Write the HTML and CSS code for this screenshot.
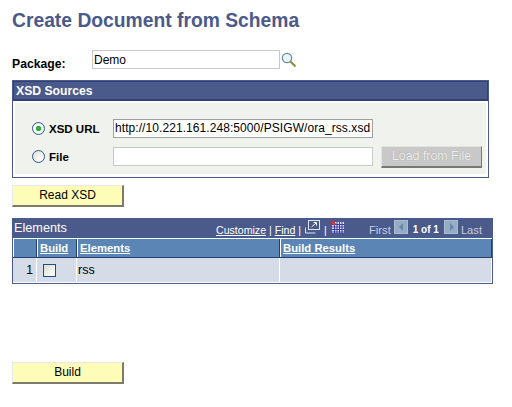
FILE: index.html
```html
<!DOCTYPE html>
<html lang="en">
<head>
<meta charset="utf-8">
<title>Create Document from Schema</title>
<link rel="stylesheet" href="styles.css">
</head>
<body>
<h1 class="title">Create Document from Schema</h1>
<div class="package-row">
  <span class="package-label">Package:</span>
  <div class="text-input package-input">Demo</div>
  <svg class="lookup" width="16" height="16" viewBox="0 0 16 16"><circle cx="6" cy="6" r="4.7" fill="#e8f4f6" stroke="#5f8f9c" stroke-width="1.2"/><path d="M3.5 5a3 3 0 0 1 2-2" stroke="#fff" fill="none"/><path d="M9.5 9.5l5 5" stroke="#8c8a38" stroke-width="2"/></svg>
</div>
<section class="panel">
  <div class="panel-head">XSD Sources</div>
  <div class="panel-body">
    <div class="source-row first">
      <span class="radio on"></span>
      <span class="source-label url">XSD URL</span>
      <div class="text-input url-input">http://10.221.161.248:5000/PSIGW/ora_rss.xsd</div>
    </div>
    <div class="source-row">
      <span class="radio"></span>
      <span class="source-label file">File</span>
      <div class="text-input file-input"></div>
      <div class="load-btn">Load from File</div>
    </div>
  </div>
</section>
<div class="btn read">Read XSD</div>
<section class="grid">
  <div class="grid-head">
    <span class="grid-title">Elements</span>
    <span class="grid-links"><u>Customize</u> | <u>Find</u> |</span>
    <svg class="ico-view" width="15" height="14" viewBox="0 0 15 14"><path d="M0.5 7.5v5.5h10" fill="none" stroke="#dfe6f2"/><rect x="3.5" y="0.5" width="11" height="9" fill="#4a5a8a" stroke="#dfe6f2"/><path d="M6.5 7l4.5-4M8.5 2.5h3v3" stroke="#fff" fill="none"/></svg>
    <span class="grid-pipe">|</span>
    <svg class="ico-grid" width="15" height="15" viewBox="0 0 15 15"><rect x="2" y="3" width="12" height="11" fill="#e4e8f6"/><path d="M2 5.5h12M2 8h12M2 10.5h12M2 13h12M4.5 3v11M7 3v11M9.5 3v11M12 3v11" stroke="#3a3aa8" stroke-width="1"/><path d="M0 0l6.5 5-3.5 1.5z" fill="#e03030"/></svg>
    <span class="grid-nav">
      <span class="nav-text">First</span>
      <span class="nav-arrow left"></span>
      <b class="nav-count">1 of 1</b>
      <span class="nav-arrow right"></span>
      <span class="nav-text">Last</span>
    </span>
  </div>
  <div class="grid-cols">
    <div class="col c-num"></div>
    <div class="col c-build"><u>Build</u></div>
    <div class="col c-el"><u>Elements</u></div>
    <div class="col c-res"><u>Build Results</u></div>
  </div>
  <div class="grid-row">
    <div class="cell c-num num">1</div>
    <div class="cell c-build"><span class="check"></span></div>
    <div class="cell c-el">rss</div>
    <div class="cell c-res"></div>
  </div>
</section>
<div class="btn build">Build</div>
</body>
</html>
```
FILE: styles.css
```css
html, body { margin: 0; padding: 0; background: #fff; }
body {
  width: 512px; height: 407px; overflow: hidden;
  font-family: "Liberation Sans", Arial, sans-serif;
  font-size: 12px; color: #000;
  padding: 10px 0 0 12px; box-sizing: border-box;
}
.title { margin: 0; font-size: 19.3px; line-height: 21px; font-weight: bold; color: #4a5a8a; }
.package-row { display: flex; align-items: flex-start; margin-top: 19px; height: 30px; }
.package-label { width: 80px; margin-top: 7px; font-weight: bold; line-height: 15px; font-size: 12.2px; }
.text-input {
  box-sizing: border-box; border: 1px solid #c8c8c8; background: #fff;
  height: 19px; line-height: 17px; padding-left: 1px; white-space: nowrap; overflow: hidden;
}
.package-input { width: 188px; height: 19px; line-height: 18px; }
.lookup { margin: 2px 0 0 1px; }
.panel { width: 477px; height: 98px; box-sizing: border-box; border: 1px solid #4a5a8a; background: #fff; }
.panel-head {
  height: 20px; box-sizing: border-box; background: #4a5a8a; color: #fff; font-weight: bold;
  font-size: 12.2px; line-height: 19px; padding-left: 2px; border: 1px solid #2f4279; border-bottom-width: 2px;
}
.panel-body { background: #f0f2ee; margin: 2px; height: 71px; box-sizing: border-box; padding-top: 16px; }
.source-row { display: flex; align-items: center; height: 19px; margin-bottom: 9px; }
.radio {
  box-sizing: border-box; width: 13px; height: 13px; border-radius: 50%; margin-left: 17px;
  border: 1px solid #2f5a8a; background: radial-gradient(circle at 65% 65%, #fff, #dcdcd4);
  flex: none;
}
.radio.on { background: radial-gradient(circle, #28b040 0 2.5px, #fff 3px, #e6e6e0); }
.source-label { font-weight: bold; margin-left: 3px; width: 65px; flex: none; font-size: 11.5px; padding-left: 1px; box-sizing: border-box; }
.url-input { width: 260px; border-color: #a0a0a0; letter-spacing: 0.07px; }
.file-input { width: 260px; }
.load-btn {
  box-sizing: border-box; width: 101px; height: 22px; margin-left: 8px; background: #c8c8c8;
  color: #eee; text-align: center; line-height: 19px; font-size: 12.4px;
  border: 1px solid #e2e2e2; border-right: 1px solid #777; border-bottom: 2px solid #777;
  text-shadow: 0 0 1px #999;
}
.btn {
  box-sizing: border-box; width: 112px; height: 22px; background: #fdfdb8; text-align: center;
  line-height: 19px; border: 1px solid #e8e8e8; border-right: 2px solid #7d7a6c; border-bottom: 2px solid #7d7a6c;
}
.read { margin-top: 7px; }
.grid {
  width: 481px; height: 66px; box-sizing: border-box; margin-top: 11px;
  border: 1px solid #4a5a8a; border-top: 0;
}
.grid-head { height: 20px; background: #4a5a8a; color: #fff; position: relative; }
.grid-title { position: absolute; left: 1px; top: 0; line-height: 20px; font-size: 12.7px; }
.grid-links { position: absolute; left: 203px; top: 2px; font-size: 10.6px; line-height: 21px; white-space: nowrap; }
.ico-view { position: absolute; left: 292px; top: 2px; }
.grid-pipe { position: absolute; left: 311px; top: 2px; font-size: 10.6px; line-height: 21px; }
.ico-grid { position: absolute; left: 317px; top: 1px; }
.grid-nav { position: absolute; left: 356px; top: 0; display: flex; align-items: center; height: 20px; font-size: 11px; }
.nav-text { color: #c5cfe0; margin-top: 3px; font-size: 11.2px; }
.nav-arrow {
  width: 14px; height: 14px; background: #94adc4; margin: -2px 5px 0 3px; position: relative; display: block;
  border: 1px solid #a8bdd0; box-sizing: border-box;
}
.nav-arrow::after {
  content: ""; position: absolute; top: 2px; border: 4px solid transparent;
}
.nav-arrow.left::after { left: 0; border-right-color: #6a86a6; }
.nav-arrow.right::after { left: 5px; border-left-color: #6a86a6; }
.nav-arrow.right { margin: -2px 3px 0 5px; }
.nav-count { color: #fff; margin-top: 3px; font-size: 10px; white-space: nowrap; }
.grid-cols { display: flex; height: 20px; background: #5a85b4; border-top: 1px solid #fff; border-bottom: 1px solid #24406e; box-sizing: border-box; }
.col { box-sizing: border-box; color: #fff; font-weight: bold; font-size: 11.3px; line-height: 18px; padding-left: 2px; border-left: 1px solid #fff; border-right: 1px solid #24406e; }
.c-num { width: 24px; flex: none; }
.c-build { width: 40px; flex: none; }
.c-el { width: 203px; flex: none; }
.c-res { flex: 1; }
.grid-row { display: flex; height: 25px; background: #d5dce8; border-bottom: 1px solid #fff; box-sizing: border-box; }
.cell { box-sizing: border-box; border-right: 1px solid #fff; line-height: 24px; padding-left: 1px; font-size: 12.5px; }
.num { text-align: right; padding-right: 3px; font-size: 12px; }
.c-build.cell { padding-left: 6px; display: flex; align-items: center; }
.check { display: block; width: 13px; height: 13px; box-sizing: border-box; border: 1px solid #1f4f80; background: linear-gradient(135deg, #dcdcd4, #fff); }
.build { margin-top: 78px; }
```
